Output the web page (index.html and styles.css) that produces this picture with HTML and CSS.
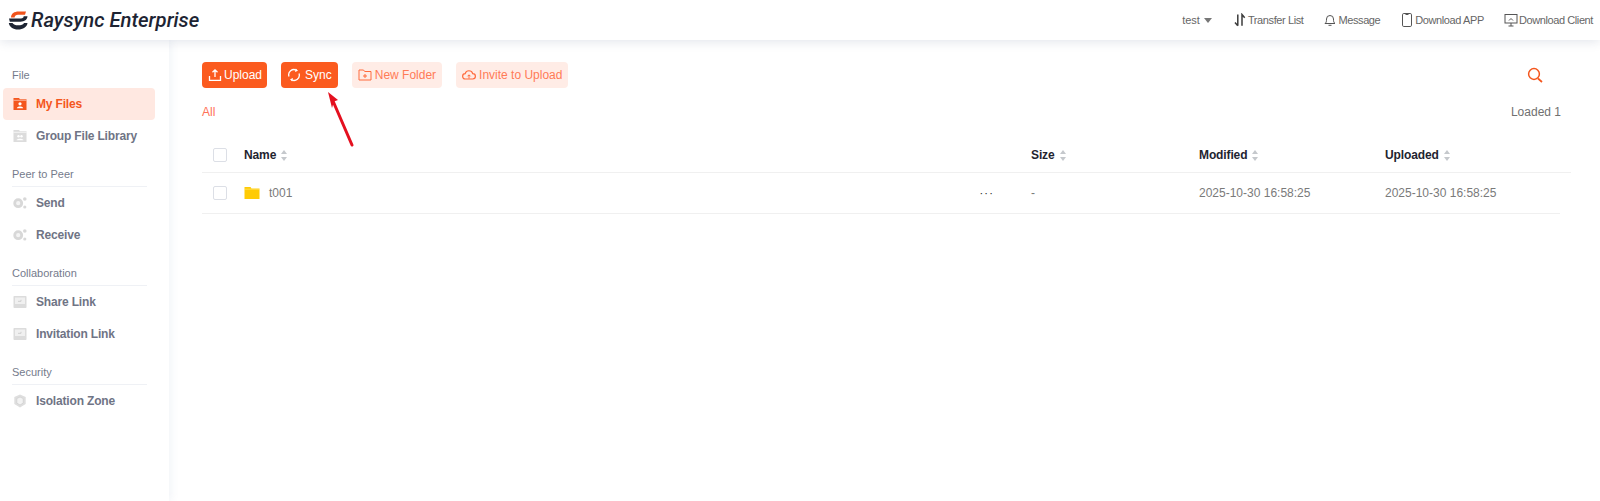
FILE: index.html
```html
<!DOCTYPE html>
<html lang="en">
<head>
<meta charset="utf-8">
<title>Raysync Enterprise</title>
<link rel="stylesheet" href="styles.css">
</head>
<body>
<header class="topbar">
  <div class="brand">
    <svg class="brand-mark" viewBox="0 0 20 19"><path d="M3 6.500C3 2.500 6.500.5 10.500.5H18l-1 3.200H10C8 3.700 6.800 4.700 6.600 6.500z" fill="#f0531c"/><path d="M1 7.500h12c1.800 0 2.600-.9 2.700-2.200H19.500c-.2 3.500-3 5.400-7 5.400H1.800z" fill="#1d2433"/><path d="M.8 12h3.700c1 1.600 3 2.300 5.500 2.300 3 0 5.600-.6 6-2.300h3.500c-.4 4-4.500 6.500-9.500 6.500S1.500 16 .8 12z" fill="#1d2433"/></svg>
    <span class="brand-name">Raysync Enterprise</span>
  </div>
  <nav class="topnav">
    <span class="topnav-item user">test <i class="caret"></i></span>
    <span class="topnav-item"><svg class="ico" viewBox="0 0 14 14"><path d="M4.800 1.500v11.300M4.800 12.800 2 9.500M9 12.800V1.500l2.700 3.200" fill="none" stroke="#3c3c3c" stroke-width="1.500"/></svg>Transfer List</span>
    <span class="topnav-item"><svg class="ico" viewBox="0 0 14 14"><path d="M2 10.500c1.300-1 1.500-2 1.500-4.500a3.500 3.500 0 0 1 7 0c0 2.500.2 3.500 1.500 4.500zM5.500 12.300h3" fill="none" stroke="#555" stroke-width="1"/></svg>Message</span>
    <span class="topnav-item"><svg class="ico" viewBox="0 0 14 14"><rect x="2.500" y=".5" width="9" height="13" rx="1.300" fill="none" stroke="#555"/><path d="M5.500 1.500h3" stroke="#555"/></svg>Download APP</span>
    <span class="topnav-item"><svg class="ico" viewBox="0 0 14 14"><rect x="1" y="1.500" width="12" height="8.500" fill="none" stroke="#555"/><path d="M7 10v3M4.500 13h5M5 7.500l2-2 2 2" fill="none" stroke="#555"/></svg>Download Client</span>
  </nav>
</header>

<div class="shell">
  <aside class="sidebar">
    <section class="side-group">
      <h2 class="side-title side-title-plain">File</h2>
      <a class="side-item active"><svg class="side-ico" viewBox="0 0 14 14"><path d="M.500 1h5.500l1 1.200h6.500v10.800H.500z" fill="#f4561d"/><path d="M.500 3.300h13" stroke="#ffd9cb" stroke-width=".7"/><circle cx="7" cy="6.800" r="1.600" fill="#fff"/><path d="M3.800 11.300c.3-2.400 6.100-2.400 6.400 0z" fill="#fff"/></svg>My Files</a>
      <a class="side-item"><svg class="side-ico" viewBox="0 0 14 14"><path d="M.500 1h5.500l1 1.200h6.500v10.800H.500z" fill="#dcdcdc"/><path d="M.500 3.300h13" stroke="#fff" stroke-width=".7"/><circle cx="5.500" cy="7.300" r="1.200" fill="#fff"/><circle cx="8.500" cy="7.300" r="1.200" fill="#fff"/><path d="M3.500 11.300c.3-2 6.700-2 7 0z" fill="#fff"/></svg>Group File Library</a>
    </section>
    <section class="side-group">
      <h2 class="side-title">Peer to Peer</h2>
      <a class="side-item"><svg class="side-ico" viewBox="0 0 14 14"><circle cx="5.200" cy="7.200" r="3.500" fill="#f4f4f4" stroke="#d8d8d8" stroke-width="2.800"/><circle cx="11.800" cy="3" r="1.800" fill="#d8d8d8"/><circle cx="11.800" cy="11" r="1.600" fill="#d8d8d8"/></svg>Send</a>
      <a class="side-item"><svg class="side-ico" viewBox="0 0 14 14"><circle cx="5.200" cy="7.200" r="3.500" fill="#f4f4f4" stroke="#d8d8d8" stroke-width="2.800"/><circle cx="11.800" cy="3" r="1.800" fill="#d8d8d8"/><circle cx="11.800" cy="11" r="1.600" fill="#d8d8d8"/></svg>Receive</a>
    </section>
    <section class="side-group">
      <h2 class="side-title">Collaboration</h2>
      <a class="side-item"><svg class="side-ico" viewBox="0 0 14 14"><rect x=".500" y="1" width="13" height="12" rx=".8" fill="#dcdcdc"/><rect x="2" y="2.500" width="10" height="6.500" fill="#f0f0f0"/><path d="M5 6.300h3V4.800" stroke="#cfcfcf" fill="none"/></svg>Share Link</a>
      <a class="side-item"><svg class="side-ico" viewBox="0 0 14 14"><rect x=".500" y="1" width="13" height="12" rx=".8" fill="#dcdcdc"/><rect x="2" y="2.500" width="10" height="6.500" fill="#f0f0f0"/><path d="M5 6.300h3V4.800" stroke="#cfcfcf" fill="none"/></svg>Invitation Link</a>
    </section>
    <section class="side-group">
      <h2 class="side-title">Security</h2>
      <a class="side-item"><svg class="side-ico" viewBox="0 0 14 14"><path d="M7 .500 12.700 3v7L7 13.500 1.300 10V3z" fill="#dedede"/><path d="M7 3 10.200 4.500v4.600L7 11 3.800 9.100V4.500z" fill="#f2f2f2" stroke="#cfcfcf" stroke-width=".7"/></svg>Isolation Zone</a>
    </section>
  </aside>

  <main class="content">
    <div class="toolbar">
      <button class="btn btn-solid btn-upload"><svg class="btn-ico" viewBox="0 0 14 14"><path d="M7 9V2M4.500 4.300 7 1.800l2.500 2.500M1.500 8v4.300h11V8" fill="none" stroke="#fff" stroke-width="1.300"/></svg>Upload</button>
      <button class="btn btn-solid"><svg class="btn-ico btn-ico-sync" viewBox="0 0 14 14"><path d="M2 8.500A5.200 5.200 0 0 1 9.500 2.300M12 5.500A5.200 5.200 0 0 1 4.500 11.700" fill="none" stroke="#fff" stroke-width="1.300"/><path d="M8.800 .5 11 2.800 8 4zM5.200 13.500 3 11.200 6 10z" fill="#fff"/></svg>Sync</button>
      <button class="btn btn-soft"><svg class="btn-ico" viewBox="0 0 14 14"><path d="M1 2h4.500l1.200 1.500H13v8.500H1z" fill="none" stroke="#ff6a3c" stroke-width="1"/><path d="M7 6v4M5 8h4" stroke="#ff6a3c"/></svg>New Folder</button>
      <button class="btn btn-soft"><svg class="btn-ico" viewBox="0 0 14 14"><path d="M4 11H3.500a2.700 2.700 0 0 1-.3-5.400 3.900 3.900 0 0 1 7.500 0 2.700 2.700 0 0 1 0 5.400H4z" fill="none" stroke="#ff6a3c" stroke-width="1.200"/><path d="M7 10.500V7M5.500 8.300 7 6.800l1.500 1.500" fill="none" stroke="#ff6a3c"/></svg>Invite to Upload</button>
      <svg class="search" viewBox="0 0 16 16"><circle cx="7" cy="7" r="5.400" fill="none" stroke="#f4561d" stroke-width="1.500"/><path d="M11 11.500l4 3.500" stroke="#f4561d" stroke-width="1.700"/></svg>
    </div>
    <div class="crumbs"><span class="crumb">All</span><span class="loaded">Loaded 1</span></div>

    <div class="row row-head">
      <span class="check"></span>
      <span class="col">Name<i class="sort"></i></span>
      <span class="col">Size<i class="sort"></i></span>
      <span class="col">Modified<i class="sort"></i></span>
      <span class="col">Uploaded<i class="sort"></i></span>
    </div>
    <div class="row row-body">
      <span class="check"></span>
      <span class="col name-cell">
        <svg class="folder" viewBox="0 0 16 14"><path d="M.5 1h6l1 1.500H15.500v10.500H.500z" fill="#ffcb05"/><path d="M.5 3.200h15" stroke="#fff3b8" stroke-width=".4"/></svg>
        <span class="file-name">t001</span>
        <span class="more">···</span>
      </span>
      <span class="col">-</span>
      <span class="col">2025-10-30 16:58:25</span>
      <span class="col">2025-10-30 16:58:25</span>
    </div>
    <svg class="arrow" viewBox="0 0 40 64"><path d="M29 57 10 13" stroke="#e4101f" stroke-width="3" stroke-linecap="round" fill="none"/><path d="M5 4 15 12 11 13.500 9 20z" fill="#e4101f"/></svg>
  </main>
</div>
</body>
</html>
```
FILE: styles.css
```css
* { box-sizing: border-box; }
html, body { margin: 0; height: 100%; overflow: hidden; }
body { font-family: "Liberation Sans", Arial, sans-serif; font-size: 12px; color: #666; background: #fff; }

.topbar { position: relative; z-index: 2; height: 40px; padding: 0 7px 0 8px; display: flex; align-items: center; justify-content: space-between; background: #fff; box-shadow: 0 2px 10px rgba(60, 80, 120, .14); }
.brand { display: flex; align-items: center; gap: 3px; }
.brand-mark { width: 20px; height: 19px; }
.brand-name { font-family: Roboto, sans-serif; font-style: italic; font-weight: 500; font-size: 20.300px; color: #1d2433; }
.topnav { display: flex; align-items: center; gap: 20px; }
.topnav-item { display: flex; align-items: center; gap: 1px; font-size: 11px; letter-spacing: -.4px; color: #666; }
.user { gap: 4px; margin-right: 1px; letter-spacing: 0; }
.caret { width: 0; height: 0; border: 4px solid transparent; border-top: 5px solid #777; border-bottom: 0; }
.ico { width: 14px; height: 14px; }

.shell { display: flex; height: 461px; }
.sidebar { width: 169px; flex: none; padding: 25px 0 0 3px; box-shadow: 2px 0 8px rgba(90, 120, 170, .09); }
.side-group { margin-bottom: 12px; }
.side-title { margin: 0 9px 0 9px; width: 135px; height: 23px; padding-top: 3px; font-size: 11px; font-weight: 400; line-height: 14px; color: #757b8c; border-bottom: 1px solid #eff1f5; }
.side-title-plain { border-bottom-color: transparent; }
.side-item { display: flex; align-items: center; gap: 9px; width: 152px; height: 32px; padding-left: 10px; border-radius: 4px; font-size: 12px; font-weight: 700; letter-spacing: -.17px; color: #6f7485; }
.side-item.active { background: #ffe8e1; color: #f4561d; }
.side-ico { width: 14px; height: 14px; flex: none; }

.content { position: relative; flex: 1; padding: 22px 29px 0 33px; }
.toolbar { display: flex; align-items: center; gap: 14px; height: 26px; }
.btn { display: flex; align-items: center; justify-content: center; gap: 2px; height: 26px; padding: 0 6px; border: 0; border-radius: 4px; font: 12px "Liberation Sans", Arial, sans-serif; }
.btn-solid { background: #fb5b1f; color: #fff; }
.btn-upload { padding-right: 5px; }
.btn-soft { gap: 3px; background: #ffece6; color: #ff7b56; }
.btn-ico { width: 14px; height: 14px; flex: none; }
.btn-ico-sync { margin-right: 2px; }
.search { width: 16px; height: 16px; margin-left: auto; margin-right: 28px; }
.crumbs { display: flex; justify-content: space-between; align-items: center; height: 16px; margin-top: 16px; padding-right: 10px; }
.crumb { color: #ff7157; }
.loaded { color: #707070; }

.row { display: grid; grid-template-columns: 42px 787px 168px 186px 1fr; align-items: center; border-bottom: 1px solid #f0f0f0; }
.row-head { height: 35px; margin-top: 18px; font-weight: 700; letter-spacing: -.12px; color: #1f2430; }
.row-body { height: 41px; margin-right: 11px; color: #7a7a7a; }
.check { width: 14px; height: 14px; margin-left: 11px; border: 1px solid #dcdfe6; border-radius: 2px; background: #fff; }
.col { display: flex; align-items: center; }
.sort { display: inline-block; position: relative; width: 7px; height: 11px; margin-left: 5px; }
.sort::before, .sort::after { content: ""; position: absolute; left: 0; border: 3.500px solid transparent; }
.sort::before { top: 0; border-top: 0; border-bottom: 4.500px solid #c5c8cc; }
.sort::after { bottom: 0; border-bottom: 0; border-top: 4.500px solid #c5c8cc; }
.name-cell { gap: 9px; }
.folder { width: 16px; height: 14px; }
.file-name { flex: 1; }
.more { margin-right: 37px; color: #222; font-size: 11px; letter-spacing: 1.200px; line-height: 12px; }

.arrow { position: absolute; left: 154px; top: 48px; width: 40px; height: 64px; }
```
